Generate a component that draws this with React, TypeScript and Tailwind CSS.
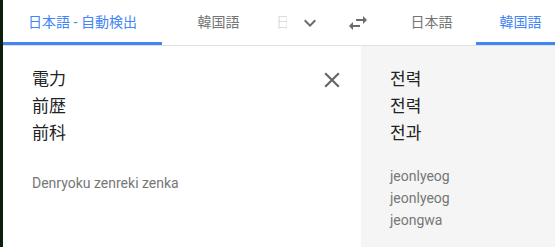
import React from "react";

const jp = { fontFamily: 'Roboto, "Noto Sans CJK JP", sans-serif' };
const kr = { fontFamily: 'Roboto, "Noto Sans CJK KR", sans-serif' };

export default function App() {
  return (
    <div className="flex w-[555px] h-[247px] overflow-hidden bg-white" style={jp}>
      <div className="w-[3px] shrink-0 bg-[#0b1d0b]" />
      <div className="flex flex-col flex-1 min-w-0">
        <div className="flex h-[46px] shrink-0 items-stretch border-b border-[#e0e0e0] text-[14px]">
          <div className="w-[159px] shrink-0 flex items-center justify-center border-b-[3px] border-[#4285f4] pt-[3px] text-[#4285f4]">
            日本語 - 自動検出
          </div>
          <div className="w-[113px] shrink-0 flex items-center justify-center pb-0 text-[#757575]">
            韓国語
          </div>
          <div className="w-[11px] shrink-0 overflow-hidden flex items-center ml-[1px] text-[#dcdcdc] whitespace-nowrap">
            日本語
          </div>
          <div className="flex items-center ml-[11px]">
            <svg width="24" height="24" viewBox="0 0 24 24" fill="#6b6b6b">
              <path d="M7.41 8.59L12 13.17l4.59-4.58L18 10l-6 6-6-6 1.41-1.41z" />
            </svg>
          </div>
          <div className="flex items-center ml-[24px]">
            <svg width="24" height="24" viewBox="0 0 24 24" fill="#6b6b6b">
              <path d="M6.99 11L3 15l3.99 4v-3H14v-2H6.99v-3zM21 9l-4-4v3h-7v2h7v3l4-4z" />
            </svg>
          </div>
          <div className="w-[89px] shrink-0 ml-[17px] flex items-center justify-center text-[#757575]">
            日本語
          </div>
          <div className="w-[89px] shrink-0 flex items-center justify-center border-b-[3px] border-[#4285f4] pt-[3px] text-[#4285f4]" style={kr}>
            韓国語
          </div>
        </div>
        <div className="flex flex-1">
          <div className="w-[358px] shrink-0 flex pl-[29px] pt-[20px] pr-[16px]">
            <div className="flex-1 flex flex-col">
              <div className="text-[17px] leading-[27px] text-[#222]">
                <div>電力</div>
                <div>前歴</div>
                <div>前科</div>
              </div>
              <div className="mt-[26px] text-[14px] leading-[20px] text-[#777]" style={{ fontFamily: "Roboto, sans-serif" }}>
                Denryoku zenreki zenka
              </div>
            </div>
            <div className="pt-[1px]">
              <svg width="26" height="26" viewBox="0 0 24 24" fill="#666">
                <path d="M19 6.41L17.59 5 12 10.59 6.41 5 5 6.41 10.59 12 5 17.59 6.41 19 12 13.41 17.59 19 19 17.59 13.41 12z" />
              </svg>
            </div>
          </div>
          <div className="flex-1 bg-[#f5f5f5] pl-[29px] pt-[20px]" style={kr}>
            <div className="text-[17px] leading-[27px] text-[#222]">
              <div>전력</div>
              <div>전력</div>
              <div>전과</div>
            </div>
            <div className="mt-[18px] text-[14px] leading-[22px] text-[#777]" style={{ fontFamily: "Roboto, sans-serif" }}>
              <div>jeonlyeog</div>
              <div>jeonlyeog</div>
              <div>jeongwa</div>
            </div>
          </div>
        </div>
      </div>
    </div>
  );
}
